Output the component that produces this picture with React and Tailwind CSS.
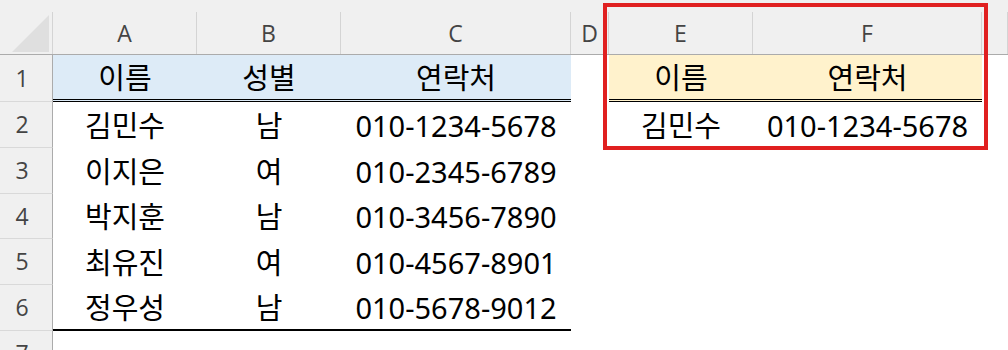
const grid = 'grid grid-cols-[53px_144px_144px_230px_38px_144px_229px_1fr]';
const cellFont = "font-['Noto_Sans','Noto_Sans_CJK_KR',sans-serif] text-[29px] leading-none text-black";

const people = [
  { name: '김민수', gender: '남', phone: '010-1234-5678', h: 'h-[46px]' },
  { name: '이지은', gender: '여', phone: '010-2345-6789', h: 'h-[46px]' },
  { name: '박지훈', gender: '남', phone: '010-3456-7890', h: 'h-[45px]' },
  { name: '최유진', gender: '여', phone: '010-4567-8901', h: 'h-[46px]' },
  { name: '정우성', gender: '남', phone: '010-5678-9012', h: 'h-[46px]' },
];

const RowNum = ({ n }) => (
  <div className="bg-[#f0f0f0] border-r border-r-[#ababab] border-b border-b-[#d9d9d9] flex items-center justify-center pr-2 font-['Open_Sans',sans-serif] text-[23px] text-[#444]">
    {n}
  </div>
);

const Cell = ({ children, className = '' }) => (
  <div className={`flex items-center justify-center ${cellFont} ${className}`}>{children}</div>
);

const App = () => {
  const letters = ['A', 'B', 'C', 'D', 'E', 'F', ''];

  return (
    <div className="relative w-[1008px] h-[350px] overflow-hidden bg-white">
      {/* column headers */}
      <div className={`${grid} h-[55px] bg-[#f0f0f0] border-b border-[#ababab]`}>
        <div className="mt-3 border-r border-[#d4d4d4] relative">
          <svg width="40" height="40" className="absolute left-[12px] top-[3px]">
            <polygon points="37,0 37,37 0,37" fill="#dfdfdf" />
          </svg>
        </div>
        {letters.map((l, i) => (
          <div
            key={i}
            className="mt-3 border-r border-[#d4d4d4] flex items-center justify-center font-['Open_Sans',sans-serif] text-[23px] text-[#444]"
          >
            {l}
          </div>
        ))}
      </div>

      {/* row 1 - headers */}
      <div className={`${grid} h-[47px]`}>
        <RowNum n={1} />
        <Cell className="bg-[#ddebf7] border-b-[3px] border-double border-black">이름</Cell>
        <Cell className="bg-[#ddebf7] border-b-[3px] border-double border-black">성별</Cell>
        <Cell className="bg-[#ddebf7] border-b-[3px] border-double border-black">연락처</Cell>
        <div />
        <Cell className="bg-[#fff2cc] border-b-[3px] border-double border-black">이름</Cell>
        <Cell className="bg-[#fff2cc] border-b-[3px] border-double border-black">연락처</Cell>
        <div />
      </div>

      {people.map((p, i) => {
        const last = i === people.length - 1;
        const edge = last ? 'border-b-2 border-black' : '';
        return (
          <div key={p.name} className={`${grid} ${p.h}`}>
            <RowNum n={i + 2} />
            <Cell className={edge}>{p.name}</Cell>
            <Cell className={edge}>{p.gender}</Cell>
            <Cell className={edge}>{p.phone}</Cell>
            <div />
            {i === 0 ? (
              <>
                <Cell>{p.name}</Cell>
                <Cell>{p.phone}</Cell>
              </>
            ) : (
              <>
                <div />
                <div />
              </>
            )}
            <div />
          </div>
        );
      })}

      <div className={`${grid} h-[46px]`}>
        <RowNum n={7} />
      </div>

      {/* selection highlight */}
      <div className="absolute left-[603px] top-[3px] w-[385px] h-[147px] border-4 border-[#e02020]" />
    </div>
  );
};

export default App;
